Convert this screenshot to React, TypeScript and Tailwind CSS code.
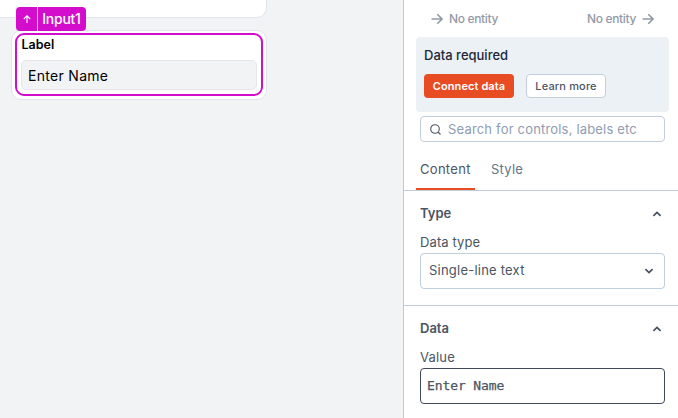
import type { ReactNode } from "react";

function Arrow({ className = "" }: { className?: string }) {
  return (
    <svg viewBox="0 0 12 12" className={className} fill="none" stroke="currentColor" strokeWidth="1.6">
      <path d="M0.5 6H11M6.3 1.3L11 6L6.3 10.7" />
    </svg>
  );
}

function Chevron({ down = false }: { down?: boolean }) {
  return (
    <svg viewBox="0 0 10 6" className="h-1.5 w-2.5" fill="none" stroke="#465060" strokeWidth="1.7">
      <path d={down ? "M1.4 1.2L5 4.6L8.6 1.2" : "M1.4 4.8L5 1.4L8.6 4.8"} />
    </svg>
  );
}

function SectionTitle({ children }: { children: ReactNode }) {
  return (
    <div className="flex h-5 items-center justify-between pr-[3px] text-[13px] font-semibold">
      <span>{children}</span>
      <Chevron />
    </div>
  );
}

function Canvas() {
  return (
    <main className="h-full w-[403px] shrink-0 overflow-hidden bg-[#f1f3f5] text-black">
      <div className="-ml-3 h-[18px] w-[279px] rounded-br-[10px] border border-t-0 border-[#e0e5eb] bg-white" />
      <div className="mt-3 ml-[11px] h-[70px] w-[256px] rounded-[10px] border border-[#e0e5eb] bg-white px-[3px] py-[2px]">
        <div className="relative h-[63px] w-[248px] rounded-[9px] border-2 border-[#d30dcb] px-1 pt-[3px]">
          <div className="absolute -top-[28px] -left-px flex h-6 w-[70px] overflow-hidden rounded-[4px] bg-[#d30dcb] text-white">
            <span className="flex w-[22px] items-center justify-center border-r border-[#f6c5f5]">
              <svg viewBox="0 0 8 8" className="h-2 w-2" fill="none" stroke="currentColor" strokeWidth="1.1">
                <path d="M4 8V0.8M0.8 4L4 0.8L7.2 4" />
              </svg>
            </span>
            <span className="flex flex-1 items-center justify-center pr-px text-sm font-medium tracking-[-0.25px]">Input1</span>
          </div>
          <div className="h-[22px] pl-[0.5px] text-[12.5px] leading-[13px] font-semibold">Label</div>
          <div className="flex h-[30px] w-[236px] items-center rounded-[5px] border border-[#e4e7eb] bg-[#f1f3f5] px-1.5 pt-px text-sm tracking-[0.3px]">Enter Name</div>
        </div>
      </div>
    </main>
  );
}

export default function App() {
  return (
    <div className="flex h-[418px] w-[678px] overflow-hidden bg-white font-['Inter',sans-serif]">
      <Canvas />
      <aside className="h-full w-[275px] shrink-0 border-l border-[#c4cad1] bg-white text-[13px] text-[#4b5563]">
        <div className="flex h-[37px] items-center justify-between pt-px pr-[24px] pl-[27px] text-xs text-[#939aa6]">
          <div className="flex items-center gap-1.5 font-medium tracking-[-0.35px]"><Arrow className="h-3 w-3" />No entity</div>
          <div className="flex items-center gap-1.5 font-medium tracking-[-0.35px]">No entity<Arrow className="h-3 w-3" /></div>
        </div>

        <section className="mr-[9px] ml-3 h-[75px] rounded-[4px] bg-[#ecf1f6] px-2 pt-2">
          <h2 className="h-[29px] text-[13px] leading-5 font-medium text-[#202838]">Data required</h2>
          <div className="flex gap-3 text-[11px]">
            <button className="h-6 w-[90px] rounded-[4px] bg-[#e84c23] font-semibold tracking-[0.1px] whitespace-nowrap text-white">Connect data</button>
            <button className="h-6 w-20 rounded-[4px] border border-[#c3cfdc] bg-white font-medium tracking-[0.15px] whitespace-nowrap">Learn more</button>
          </div>
        </section>

        <div className="mt-1 mr-[13px] ml-4 flex h-[26px] items-center gap-[7px] rounded-[4px] border border-[#c0cddb] pl-[9px] text-[#8f9db1]">
          <svg viewBox="0 0 11 11" className="h-[11px] w-[11px]" fill="none" stroke="#4b5563" strokeWidth="1.1">
            <circle cx="5" cy="5" r="4.3" /><path d="M8 8L10.5 10.5" />
          </svg>
          <span className="pt-px tracking-[0.18px] whitespace-nowrap">Search for controls, labels etc</span>
        </div>

        <nav className="flex h-[49px] items-stretch border-b border-[#c0cddb] pt-[7px] pl-3">
          <span className="flex w-[59px] border-b-2 border-[#e84c23] pt-[10px] pl-1 leading-5 tracking-[0.3px]">Content</span>
          <span className="pt-[10px] pl-4 leading-5 tracking-[0.25px] text-[#64748b]">Style</span>
        </nav>

        <section className="h-[115px] border-b border-[#c0cddb] pt-[13px] pr-[13px] pl-4">
          <SectionTitle>Type</SectionTitle>
          <div className="mt-2 h-[21px] leading-5 tracking-[0.1px]">Data type</div>
          <div className="flex h-9 items-center justify-between rounded-[4px] border border-[#c0cddb] pr-[10px] pl-2">
            <span className="tracking-[0.22px]">Single-line text</span>
            <Chevron down />
          </div>
        </section>

        <section className="pt-[13px] pr-[13px] pl-4">
          <SectionTitle>Data</SectionTitle>
          <div className="mt-2 h-[21px] leading-5 tracking-[0.2px]">Value</div>
          <div className="flex h-9 items-center rounded-[4px] border border-[#3f4959] pl-1.5 font-['DejaVu_Sans_Mono',monospace] text-[13px] tracking-[-0.1px] [-webkit-text-stroke:0.25px_#4b5563]">Enter Name</div>
        </section>
      </aside>
    </div>
  );
}
